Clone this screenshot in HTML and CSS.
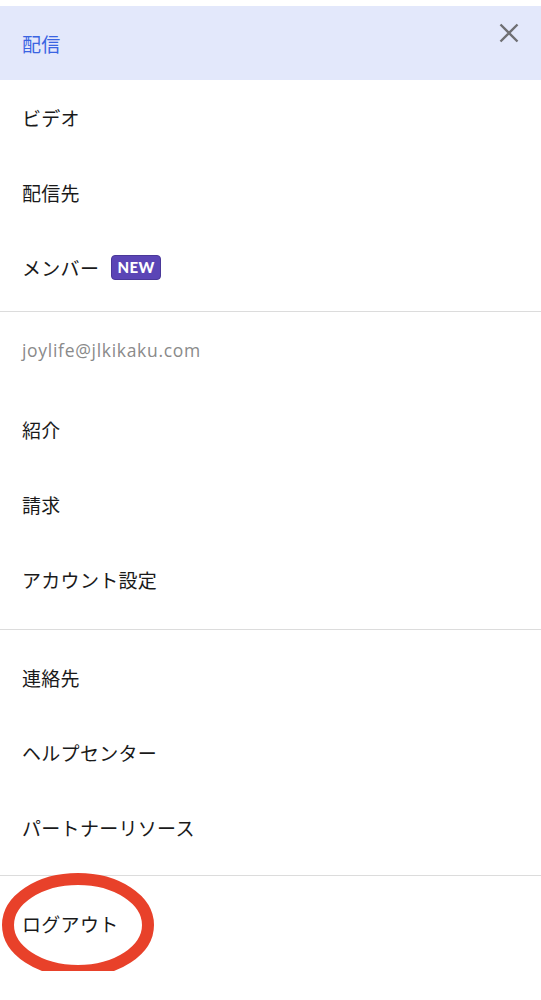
FILE: index.html
```html
<!DOCTYPE html>
<html lang="ja">
<head>
<meta charset="utf-8">
<link rel="stylesheet" href="styles.css">
</head>
<body>
<nav class="menu">
  <section class="group group-first">
    <div class="item item-active">
      <span>配信</span>
      <button class="close" aria-label="閉じる">
        <svg width="20" height="20" viewBox="0 0 20 20"><path d="M1.5 1.5 L18.5 18.5 M18.5 1.5 L1.5 18.5" stroke="#6f6f73" stroke-width="2.4" stroke-linecap="butt" fill="none"/></svg>
      </button>
    </div>
    <div class="item">ビデオ</div>
    <div class="item">配信先</div>
    <div class="item">メンバー <span class="badge">NEW</span></div>
  </section>
  <section class="group group-account">
    <div class="email">joylife@jlkikaku.com</div>
    <div class="item">紹介</div>
    <div class="item">請求</div>
    <div class="item">アカウント設定</div>
  </section>
  <section class="group group-help">
    <div class="item">連絡先</div>
    <div class="item">ヘルプセンター</div>
    <div class="item">パートナーリソース</div>
  </section>
  <section class="group group-last">
    <div class="item">ログアウト</div>
    <svg class="annot" width="160" height="112" viewBox="0 0 160 112"><ellipse cx="78" cy="53" rx="70" ry="46" fill="none" stroke="#e8412a" stroke-width="12"/></svg>
  </section>
</nav>
</body>
</html>
```
FILE: styles.css
```css
html, body {
  margin: 0;
  padding: 0;
  background: #ffffff;
}
body {
  font-family: "Noto Sans CJK JP", "Noto Sans", sans-serif;
  color: #1a1a1a;
}
.menu {
  width: 541px;
}
.group {
  border-bottom: 1px solid #dcdcdc;
}
.group-first {
  padding: 6px 0 6px;
}
.group-account {
  padding: 12px 0 12px;
}
.group-help {
  padding: 10px 0 10px;
}
.group-last {
  position: relative;
  padding: 10px 0;
  border-bottom: none;
}
.item {
  height: 75px;
  display: flex;
  align-items: center;
  padding-left: 22px;
  font-size: 19px;
  line-height: 1;
  letter-spacing: 0.3px;
}
.item-active {
  height: 74px;
  background: #e3e8fb;
  color: #3a64e2;
  justify-content: space-between;
  padding-right: 22px;
}
.close {
  border: none;
  background: none;
  padding: 0;
  margin-top: -20px;
  width: 20px;
  height: 20px;
  display: block;
}
.close svg {
  display: block;
}
.badge {
  display: inline-flex;
  align-items: center;
  justify-content: center;
  margin-left: 12px;
  width: 50px;
  height: 25px;
  box-sizing: border-box;
  background: #5b45b6;
  border: 1px solid #4a3899;
  border-radius: 4px;
  color: #ffffff;
  font-family: "Lato", sans-serif;
  font-weight: 900;
  font-size: 15px;
  letter-spacing: 0.5px;
}
.email {
  height: 52px;
  margin-bottom: 16px;
  display: flex;
  align-items: center;
  padding-left: 22px;
  font-family: "Open Sans", sans-serif;
  font-size: 17.5px;
  letter-spacing: 0.7px;
  color: #8a8a8a;
}
.annot {
  position: absolute;
  left: 0;
  top: -4px;
  pointer-events: none;
}
```
